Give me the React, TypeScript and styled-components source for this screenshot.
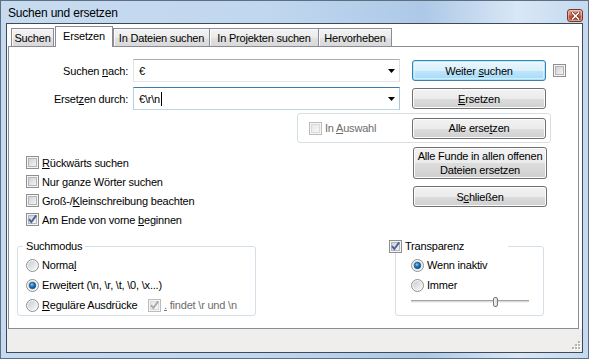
import React from 'react';
import styled, { createGlobalStyle, css } from 'styled-components';

const GlobalStyle = createGlobalStyle`
  * { box-sizing: border-box; }
  html, body { margin: 0; padding: 0; background: #ffffff; }
  body {
    font-family: "Liberation Sans", Arial, sans-serif;
    font-size: 11px;
    letter-spacing: -0.2px;
    color: #000;
  }
`;

const Window = styled.div`
  width: 589px;
  height: 359px;
  display: flex;
  flex-direction: column;
  padding: 0 5px 5px;
  border: 1px solid #5e6f82;
  background: linear-gradient(90deg, #c7dbf0 0%, #c1d7ef 45%, #adc9e7 72%, #d9e7f6 88%, #c4d9ef 100%);
`;

const TitleBar = styled.div`
  height: 22px;
  display: flex;
  align-items: center;
  padding-left: 2px;
`;

const Title = styled.span`
  font-size: 12px;
  margin-top: 2px;
`;

const CloseButton = styled.div`
  margin-left: auto;
  align-self: flex-end;
  margin-bottom: 1px;
  width: 16px;
  height: 13px;
  display: flex;
  align-items: center;
  justify-content: center;
  border: 1px solid #6b3a31;
  border-radius: 3px;
  background: linear-gradient(#e8a493 0%, #d6775f 45%, #c3462c 55%, #d56a48 100%);
  box-shadow: inset 0 0 0 1px rgba(255, 220, 210, 0.5);
`;

const Client = styled.div`
  height: 330px;
  border: 1px solid #3f4a56;
  background: #ffffff;
  display: flex;
  flex-direction: column;
`;

const TabControl = styled.div`
  margin: 0 3px 0 1px;
  display: flex;
  flex-direction: column;
`;

const TabStrip = styled.div`
  height: 22px;
  display: flex;
  align-items: flex-end;
  padding-left: 3px;
`;

const Tab = styled.div<{ $active?: boolean; $width: number; $shift: number }>`
  width: ${p => p.$width}px;
  margin-left: ${p => p.$shift}px;
  height: 18px;
  display: flex;
  align-items: center;
  justify-content: center;
  padding-top: 1px;
  border: 1px solid #898c95;
  border-bottom: none;
  background: linear-gradient(#f3f3f3 0%, #ebebeb 50%, #e1e1e1 51%, #d9d9d9 100%);
  box-shadow: inset 1px 1px 0 #fbfbfb;
  white-space: nowrap;
  ${p => p.$active && css`
    position: relative;
    z-index: 1;
    height: 21px;
    margin-bottom: -1px;
    padding-top: 0;
    padding-bottom: 2px;
    background: #ffffff;
    box-shadow: none;
  `}
`;

const Panel = styled.div`
  height: 283px;
  border: 1px solid #898c95;
  background: #ffffff;
  display: flex;
  flex-direction: column;
  padding-top: 12px;
`;

const FieldRow = styled.div<{ $gap?: number }>`
  height: 23px;
  margin-top: ${p => p.$gap ?? 0}px;
  display: flex;
  align-items: center;
`;

const FieldLabel = styled.span`
  width: 124px;
  flex: none;
  padding-right: 5px;
  text-align: right;
`;

const Combo = styled.div<{ $focused?: boolean }>`
  width: 267px;
  height: 23px;
  flex: none;
  display: flex;
  align-items: center;
  padding: 0 4px 0 5px;
  border: 1px solid;
  border-color: #abadb3 #dbdfe6 #e3e9ef #e2e3ea;
  ${p => p.$focused && css`
    border-color: #3d7bad #a4c9e3 #b7d9ed #b5cfe7;
  `}
`;

const ComboText = styled.span`
  flex: 1;
  display: flex;
  align-items: center;
`;

const Caret = styled.span`
  width: 1px;
  height: 14px;
  margin-left: 1px;
  background: #000;
`;

const Button = styled.div<{ $default?: boolean; $tall?: boolean }>`
  width: 134px;
  height: ${p => (p.$tall ? 32 : 21)}px;
  flex: none;
  display: flex;
  align-items: center;
  justify-content: center;
  text-align: center;
  line-height: 14px;
  border: 1px solid #707070;
  border-radius: 3px;
  background: linear-gradient(#f2f2f2 0%, #ebebeb 50%, #dddddd 51%, #cfcfcf 100%);
  box-shadow: inset 0 0 0 1px #fcfcfc;
  ${p => p.$default && css`
    border-color: #3c7fb1;
    background: linear-gradient(#eaf6fd 0%, #d9f0fc 50%, #bee6fd 51%, #a7d9f5 100%);
    box-shadow: inset 0 0 0 1px #48d1fa55, inset 0 0 0 2px #f4fbfe88;
  `}
`;

const SideCheck = styled.span`
  margin-left: 7px;
  display: flex;
`;

const SelectionBox = styled.div`
  margin: 3px 0 0 288px;
  width: 254px;
  height: 30px;
  display: flex;
  align-items: center;
  padding: 0 4px 0 11px;
  border: 1px solid #d5dfe5;
  border-radius: 3px;
  & > :last-child { margin-left: auto; }
`;

const Option = styled.div<{ $disabled?: boolean }>`
  display: flex;
  align-items: center;
  gap: 3px;
  white-space: nowrap;
  color: ${p => (p.$disabled ? '#6d6d6d' : '#000')};
`;

const OptionsRow = styled.div`
  display: flex;
`;

const CheckList = styled.div`
  margin: 10px 0 0 17px;
  display: flex;
  flex-direction: column;
  & > ${Option} { height: 19px; }
`;

const ButtonStack = styled.div`
  margin: 4px 31px 0 auto;
  display: flex;
  flex-direction: column;
  gap: 7px;
`;

const GroupsRow = styled.div`
  margin-top: 11px;
  display: flex;
  align-items: flex-start;
`;

const Group = styled.fieldset<{ $left: number; $width: number; $pad: number }>`
  margin: 0 0 0 ${p => p.$left}px;
  width: ${p => p.$width}px;
  padding: 2px 0 0 ${p => p.$pad}px;
  min-width: 0;
  border: 1px solid #d5dfe5;
  border-radius: 3px;
  & > ${Option} { height: 20px; }
`;

const Legend = styled.legend<{ $shift: number; $width?: number }>`
  margin-left: ${p => p.$shift}px;
  padding: 0 3px;
  height: 13px;
  line-height: 13px;
  ${p => p.$width && css`
    width: ${p.$width}px;
    padding: 0;
    display: flex;
    align-items: center;
    gap: 3px;
  `}
`;

const RegexLabel = styled.span`
  width: 103px;
`;

const SliderRow = styled.div`
  position: relative;
  width: 118px;
  height: 20px;
  padding-top: 5px;
`;

const SliderTrack = styled.div`
  height: 3px;
  border-top: 1px solid #a3a3a3;
  border-bottom: 1px solid #f0f0f0;
  background: #dcdcdc;
`;

const SliderThumb = styled.div`
  position: absolute;
  top: 2px;
  width: 5px;
  height: 10px;
  border: 1px solid #7a7a7a;
  border-radius: 2px;
  background: linear-gradient(90deg, #f4f4f4, #d8d8d8);
`;

const StatusBar = styled.div`
  height: 23px;
  margin-top: auto;
  background: #f0eeec;
  display: flex;
  justify-content: flex-end;
  align-items: flex-end;
  padding: 0 1px 2px 0;
`;

const U = styled.span`
  text-decoration: underline;
  text-underline-offset: 1px;
`;

const CheckBox = ({ checked, disabled }: { checked?: boolean; disabled?: boolean }) => (
  <svg width="13" height="13" viewBox="0 0 13 13" style={{ flex: 'none' }}>
    <defs>
      <linearGradient id="cbFill" x1="0" y1="0" x2="1" y2="1">
        <stop offset="0" stopColor="#cbcfd5" />
        <stop offset="1" stopColor="#f7f7f7" />
      </linearGradient>
      <linearGradient id="cbFillOff" x1="0" y1="0" x2="1" y2="1">
        <stop offset="0" stopColor="#e6e6e6" />
        <stop offset="1" stopColor="#f8f8f8" />
      </linearGradient>
    </defs>
    <rect x="0.5" y="0.5" width="12" height="12" fill="#f5f5f5" stroke={disabled ? '#bcbcbc' : '#8e8f8f'} />
    <rect x="2.5" y="2.5" width="8" height="8" fill={disabled ? 'url(#cbFillOff)' : 'url(#cbFill)'} stroke={disabled ? '#dadada' : '#b2b6bc'} />
    {checked && (
      <path d="M3 6.2 L5.3 9 L10.2 2.4" fill="none" stroke={disabled ? '#a9a9a9' : '#4c5f96'} strokeWidth="1.9" />
    )}
  </svg>
);

const Radio = ({ checked }: { checked?: boolean }) => (
  <svg width="13" height="13" viewBox="0 0 13 13" style={{ flex: 'none' }}>
    <defs>
      <linearGradient id="rbFill" x1="0" y1="0" x2="1" y2="1">
        <stop offset="0" stopColor="#c9cdd2" />
        <stop offset="1" stopColor="#f9f9f9" />
      </linearGradient>
      <radialGradient id="rbDot" cx="0.4" cy="0.35" r="0.7">
        <stop offset="0" stopColor="#8fd3ff" />
        <stop offset="0.45" stopColor="#1b7cc6" />
        <stop offset="1" stopColor="#0d3f75" />
      </radialGradient>
    </defs>
    <circle cx="6.5" cy="6.5" r="6" fill="#f6f6f6" stroke="#8e8f8f" />
    <circle cx="6.5" cy="6.5" r="4.5" fill="url(#rbFill)" />
    {checked && <circle cx="6.5" cy="6.5" r="3.2" fill="url(#rbDot)" stroke="#1f4f80" strokeWidth="0.8" />}
  </svg>
);

const ComboArrow = () => (
  <svg width="7" height="4" viewBox="0 0 7 4">
    <polygon points="0,0 7,0 3.5,4" fill="#000" />
  </svg>
);

const CloseGlyph = () => (
  <svg width="9" height="8" viewBox="0 0 9 8">
    <path d="M1.5 1 L7.5 7 M7.5 1 L1.5 7" stroke="#5a2a22" strokeWidth="3" strokeLinecap="square" />
    <path d="M1.5 1 L7.5 7 M7.5 1 L1.5 7" stroke="#ffffff" strokeWidth="1.6" strokeLinecap="square" />
  </svg>
);

const SizeGrip = () => (
  <svg width="10" height="10" viewBox="0 0 10 10">
    {[[7, 1], [4, 4], [7, 4], [1, 7], [4, 7], [7, 7]].map(([x, y]) => (
      <g key={`${x}-${y}`}>
        <rect x={x + 1} y={y + 1} width="2" height="2" fill="#ffffff" />
        <rect x={x} y={y} width="2" height="2" fill="#b8b4b0" />
      </g>
    ))}
  </svg>
);

const tabs = [
  { label: 'Suchen', width: 43, shift: 0 },
  { label: 'Ersetzen', width: 58, shift: 1, active: true },
  { label: 'In Dateien suchen', width: 97, shift: 0 },
  { label: 'In Projekten suchen', width: 110, shift: -1 },
  { label: 'Hervorheben', width: 74, shift: -1 },
];

const transparency = 0.73;

export default function App() {
  return (
    <>
      <GlobalStyle />
      <Window>
        <TitleBar>
          <Title>Suchen und ersetzen</Title>
          <CloseButton>
            <CloseGlyph />
          </CloseButton>
        </TitleBar>
        <Client>
          <TabControl>
            <TabStrip>
              {tabs.map(t => (
                <Tab key={t.label} $width={t.width} $shift={t.shift} $active={t.active}>
                  {t.label}
                </Tab>
              ))}
            </TabStrip>
            <Panel>
              <FieldRow>
                <FieldLabel>Suchen <U>n</U>ach:</FieldLabel>
                <Combo>
                  <ComboText>€</ComboText>
                  <ComboArrow />
                </Combo>
                <Button $default style={{ marginLeft: 12 }}>
                  <span>Weiter <U>s</U>uchen</span>
                </Button>
                <SideCheck>
                  <CheckBox />
                </SideCheck>
              </FieldRow>
              <FieldRow $gap={5}>
                <FieldLabel>Erset<U>z</U>en durch:</FieldLabel>
                <Combo $focused>
                  <ComboText>
                    {'€\\r\\n'}
                    <Caret />
                  </ComboText>
                  <ComboArrow />
                </Combo>
                <Button style={{ marginLeft: 12 }}>
                  <span><U>E</U>rsetzen</span>
                </Button>
              </FieldRow>
              <SelectionBox>
                <Option $disabled>
                  <CheckBox disabled />
                  <span>In <U>A</U>uswahl</span>
                </Option>
                <Button>
                  <span>Alle erse<U>t</U>zen</span>
                </Button>
              </SelectionBox>
              <OptionsRow>
                <CheckList>
                  <Option>
                    <CheckBox />
                    <span><U>R</U>ückwärts suchen</span>
                  </Option>
                  <Option>
                    <CheckBox />
                    <span>Nur <U>g</U>anze Wörter suchen</span>
                  </Option>
                  <Option>
                    <CheckBox />
                    <span>Groß-/<U>K</U>leinschreibung beachten</span>
                  </Option>
                  <Option>
                    <CheckBox checked />
                    <span>Am Ende von vorne <U>b</U>eginnen</span>
                  </Option>
                </CheckList>
                <ButtonStack>
                  <Button $tall>
                    <span>Alle Funde in allen offenen<br />Dateien ersetzen</span>
                  </Button>
                  <Button>
                    <span>S<U>c</U>hließen</span>
                  </Button>
                </ButtonStack>
              </OptionsRow>
              <GroupsRow>
                <Group $left={8} $width={239} $pad={8}>
                  <Legend $shift={-3}>Suchmodus</Legend>
                  <Option>
                    <Radio />
                    <span>Norma<U>l</U></span>
                  </Option>
                  <Option>
                    <Radio checked />
                    <span>Erwe<U>i</U>tert (\n, \r, \t, \0, \x...)</span>
                  </Option>
                  <Option>
                    <Radio />
                    <RegexLabel><U>R</U>eguläre Ausdrücke</RegexLabel>
                    <Option $disabled>
                      <CheckBox checked disabled />
                      <span><U>.</U> findet \r und \n</span>
                    </Option>
                  </Option>
                </Group>
                <Group $left={139} $width={149} $pad={15}>
                  <Legend $shift={-22} $width={119}>
                    <CheckBox checked />
                    <span>Transparenz</span>
                  </Legend>
                  <Option>
                    <Radio checked />
                    <span>Wenn inaktiv</span>
                  </Option>
                  <Option>
                    <Radio />
                    <span>Immer</span>
                  </Option>
                  <SliderRow>
                    <SliderTrack />
                    <SliderThumb style={{ left: Math.round((118 - 5) * transparency) }} />
                  </SliderRow>
                </Group>
              </GroupsRow>
            </Panel>
          </TabControl>
          <StatusBar>
            <SizeGrip />
          </StatusBar>
        </Client>
      </Window>
    </>
  );
}
